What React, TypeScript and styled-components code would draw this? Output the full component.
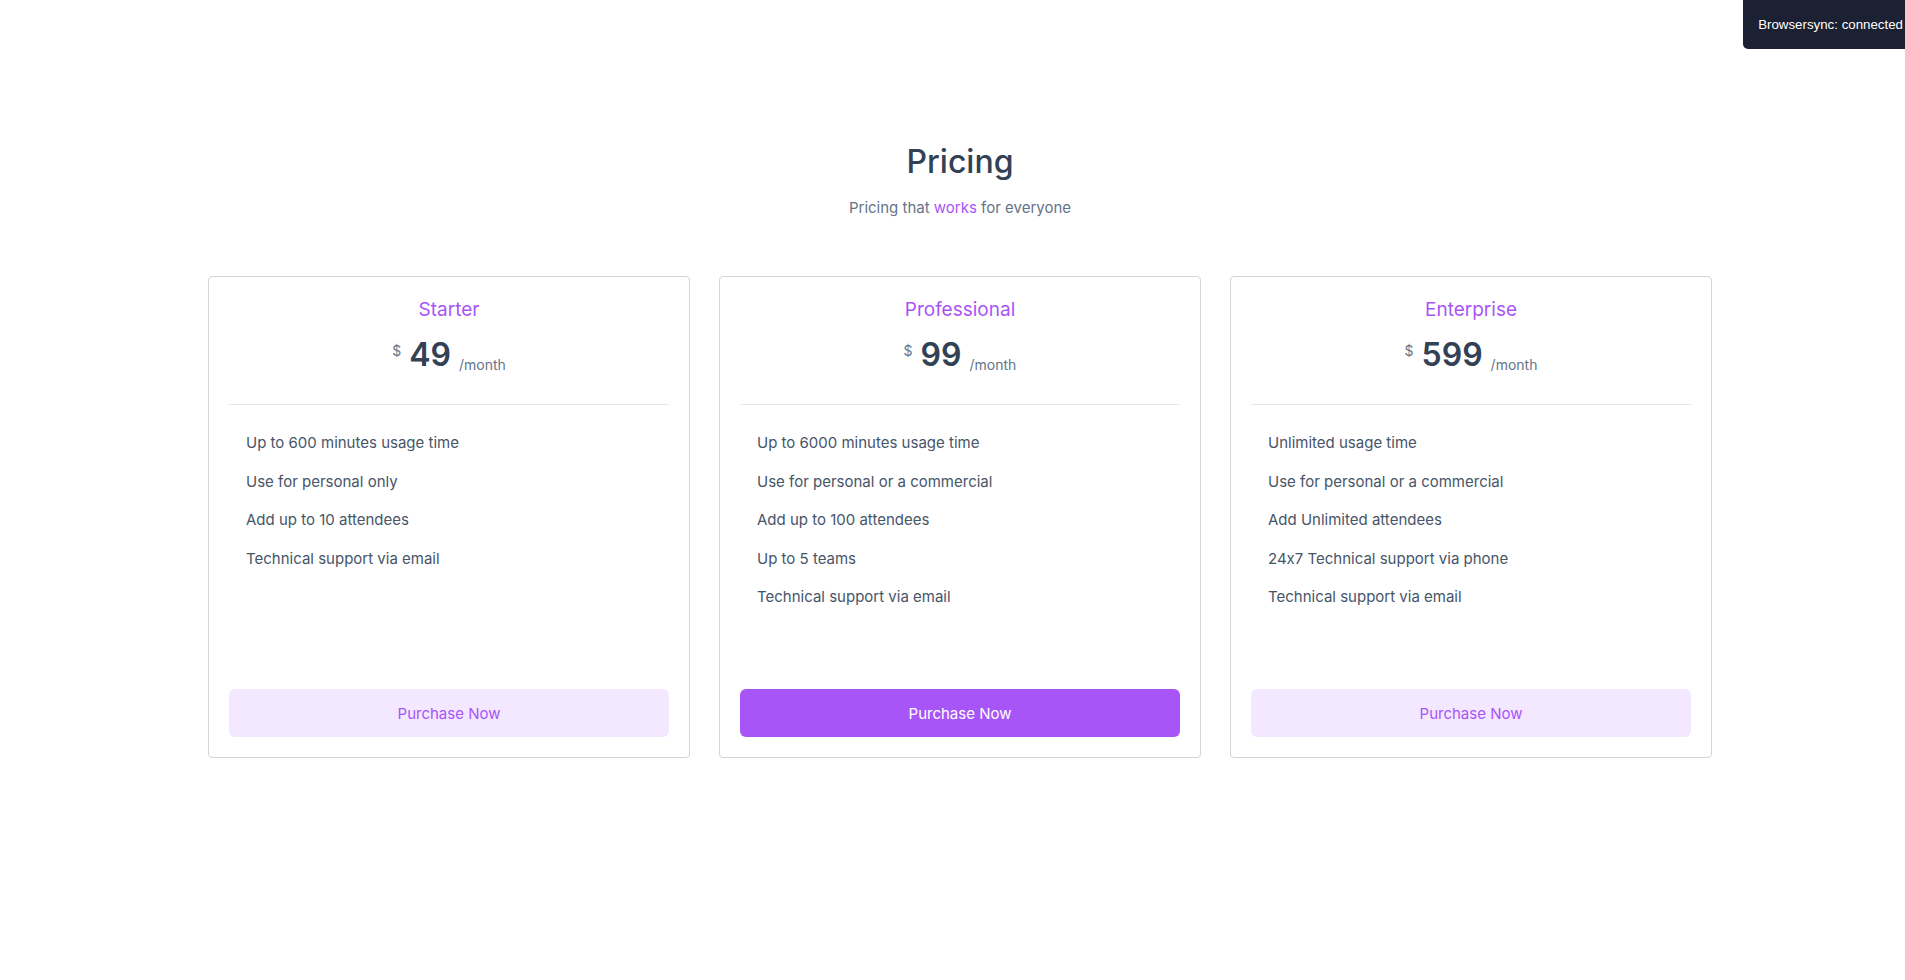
import styled, { createGlobalStyle } from 'styled-components';

const GlobalStyle = createGlobalStyle`
  html, body {
    margin: 0;
    padding: 0;
    background: #ffffff;
  }

  body {
    font-family: Inter, "Noto Sans", sans-serif;
    font-feature-settings: "calt" 0;
    -webkit-font-smoothing: antialiased;
  }

  * {
    box-sizing: border-box;
  }
`;

const Page = styled.main`
  min-height: 980px;
  padding: 142px 0 0 15px;
  overflow: hidden;
`;

const Heading = styled.h1`
  margin: 0;
  text-align: center;
  font-size: 32px;
  line-height: 40px;
  font-weight: 500;
  color: #334155;
`;

const Subheading = styled.p`
  margin: 14px 0 0;
  text-align: center;
  font-size: 15px;
  line-height: 24px;
  color: #64748b;

  span {
    color: #a855f7;
  }
`;

const Plans = styled.section`
  width: 1504px;
  margin: 56px auto 0;
  display: grid;
  grid-template-columns: repeat(3, 1fr);
  gap: 29px;
`;

const Card = styled.article`
  height: 482px;
  display: flex;
  flex-direction: column;
  padding: 19px 20px 20px;
  border: 1px solid #d4d4d8;
  border-radius: 4px;
  background: #ffffff;
`;

const CardHead = styled.header`
  padding-bottom: 29px;
  border-bottom: 1px solid #e5e7eb;
  text-align: center;
`;

const PlanName = styled.h2`
  margin: 0;
  font-size: 19px;
  line-height: 28px;
  font-weight: 400;
  color: #a855f7;
`;

const PriceRow = styled.div`
  margin-top: 11px;
  display: flex;
  justify-content: center;
  gap: 8px;
  height: 40px;
`;

const Currency = styled.span`
  margin-top: 6px;
  font-size: 14px;
  line-height: 20px;
  color: #64748b;
`;

const Amount = styled.span`
  font-size: 32px;
  line-height: 40px;
  font-weight: 600;
  color: #334155;
`;

const Period = styled.span`
  align-self: flex-end;
  font-size: 14px;
  line-height: 20px;
  color: #64748b;
`;

const Features = styled.ul`
  flex: 1;
  margin: 0;
  padding: 19px 17px 20px;
  list-style: none;
`;

const Feature = styled.li`
  padding: 7px 0;
  font-size: 15px;
  line-height: 24.5px;
  color: #475569;
`;

const PurchaseButton = styled.button<{ $primary?: boolean }>`
  width: 100%;
  height: 48px;
  border: none;
  border-radius: 6px;
  font-family: inherit;
  font-size: 15px;
  cursor: pointer;
  background: ${({ $primary }) => ($primary ? '#a855f7' : '#f3e8ff')};
  color: ${({ $primary }) => ($primary ? '#ffffff' : '#a855f7')};
`;

const SyncNotice = styled.div`
  position: fixed;
  top: 0;
  right: -13px;
  padding: 15px;
  font-family: "Liberation Sans", Arial, sans-serif;
  font-size: 13.3px;
  line-height: 19px;
  color: #ffffff;
  background: #1b2032;
  border-bottom-left-radius: 5px;
`;

type Plan = {
  name: string;
  price: number;
  features: string[];
  primary?: boolean;
};

const plans: Plan[] = [
  {
    name: 'Starter',
    price: 49,
    features: [
      'Up to 600 minutes usage time',
      'Use for personal only',
      'Add up to 10 attendees',
      'Technical support via email',
    ],
  },
  {
    name: 'Professional',
    price: 99,
    primary: true,
    features: [
      'Up to 6000 minutes usage time',
      'Use for personal or a commercial',
      'Add up to 100 attendees',
      'Up to 5 teams',
      'Technical support via email',
    ],
  },
  {
    name: 'Enterprise',
    price: 599,
    features: [
      'Unlimited usage time',
      'Use for personal or a commercial',
      'Add Unlimited attendees',
      '24x7 Technical support via phone',
      'Technical support via email',
    ],
  },
];

function App() {
  return (
    <>
      <GlobalStyle />
      <Page>
        <Heading>Pricing</Heading>
        <Subheading>
          Pricing that <span>works</span> for everyone
        </Subheading>

        <Plans>
          {plans.map((plan) => (
            <Card key={plan.name}>
              <CardHead>
                <PlanName>{plan.name}</PlanName>
                <PriceRow>
                  <Currency>$</Currency>
                  <Amount>{plan.price}</Amount>
                  <Period>/month</Period>
                </PriceRow>
              </CardHead>

              <Features>
                {plan.features.map((feature) => (
                  <Feature key={feature}>{feature}</Feature>
                ))}
              </Features>

              <PurchaseButton $primary={plan.primary}>Purchase Now</PurchaseButton>
            </Card>
          ))}
        </Plans>
      </Page>
      <SyncNotice>Browsersync: connected</SyncNotice>
    </>
  );
}

export default App;
